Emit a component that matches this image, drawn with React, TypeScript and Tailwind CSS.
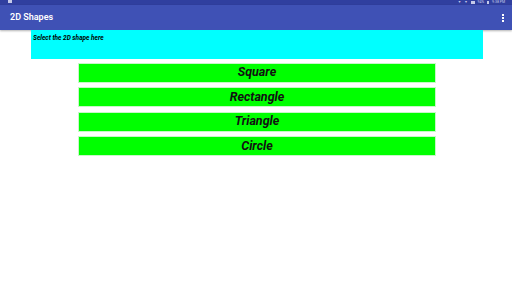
import React from "react";

export default function App() {
  const items = ["Square", "Rectangle", "Triangle", "Circle"];
  return (
    <div className="w-[512px] h-[294px] bg-white overflow-hidden" style={{ fontFamily: "Roboto, 'Liberation Sans', sans-serif" }}>
      <div className="h-[5px] bg-[#303f9f] flex items-start justify-between">
        <div className="ml-[8px] w-[4px] h-[3px] bg-[#c5cae9]" />
        <div className="flex items-center gap-[3px] mr-[7px] mt-[1px] text-[3.5px] leading-[3px] text-[#c5cae9]">
          <span>▼</span>
          <span>▼</span>
          <div className="w-[4px] h-[3px] bg-[#c5cae9]" />
          <span>94%</span>
          <div className="w-[2px] h-[3px] bg-[#c5cae9]" />
          <span>9:38 PM</span>
        </div>
      </div>
      <div className="h-[25px] bg-[#3f51b5] flex items-center justify-between pl-[10px] pr-[8px] shadow-[0_1px_2px_rgba(0,0,0,0.3)]">
        <span className="text-white text-[9px] font-semibold leading-none">2D Shapes</span>
        <div className="flex flex-col gap-[1px]">
          <div className="w-[2px] h-[2px] bg-white" />
          <div className="w-[2px] h-[2px] bg-white" />
          <div className="w-[2px] h-[2px] bg-white" />
        </div>
      </div>
      <div className="ml-[31px] w-[452px] h-[29px] bg-[#00ffff] pl-[2px] pt-[5px]">
        <div className="text-[6.5px] leading-none font-bold italic text-black">Select the 2D shape here</div>
      </div>
      <div className="ml-[78px] w-[358px] flex flex-col gap-[4.5px] mt-[3.5px]">
        {items.map((t) => (
          <div key={t} className="h-[20px] bg-[#00ff00] border border-[#c8f7c8] flex items-center justify-center">
            <span className="text-[12.5px] font-bold italic text-[#111]">{t}</span>
          </div>
        ))}
      </div>
    </div>
  );
}
